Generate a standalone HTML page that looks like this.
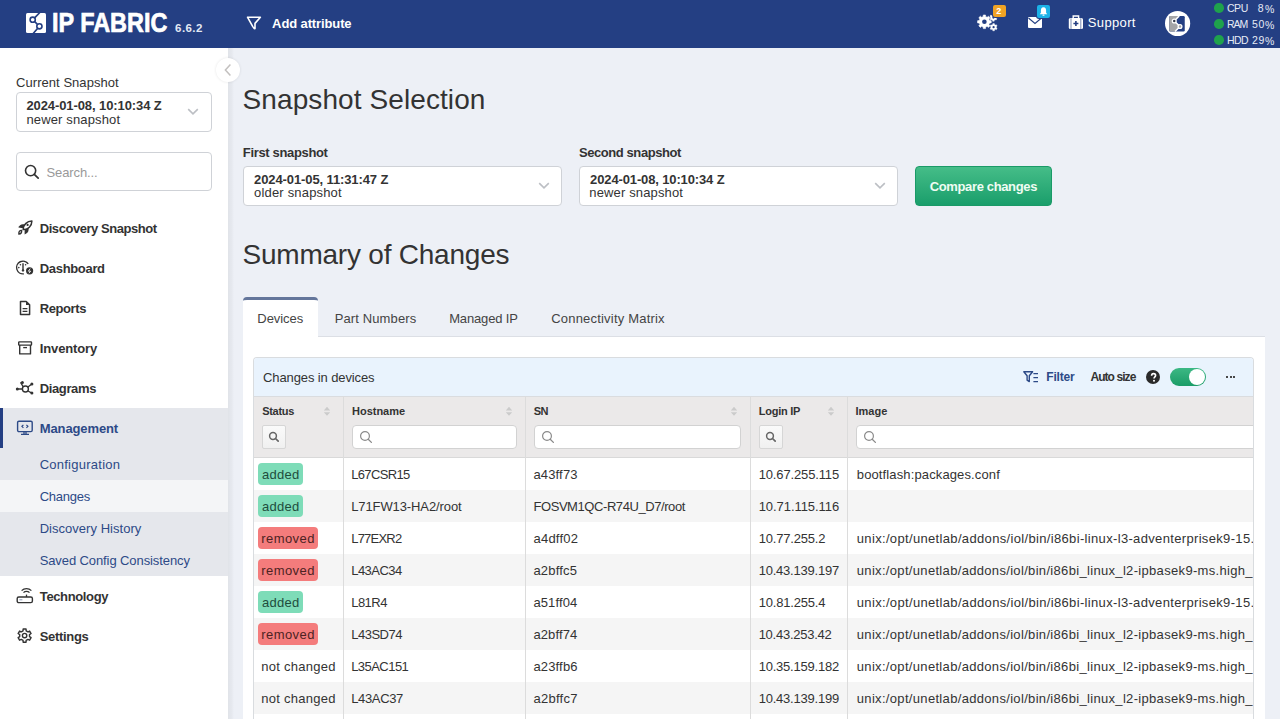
<!DOCTYPE html>
<html><head><meta charset="utf-8">
<style>
*{box-sizing:border-box;margin:0;padding:0}
html,body{width:1280px;height:719px;overflow:hidden;background:#edf0f6;font-family:"Liberation Sans",sans-serif;color:#333;position:relative}
.a{position:absolute;white-space:nowrap}
svg.a{overflow:visible}
</style></head><body>
<div class="a" style="left:0px;top:0px;width:1280px;height:48px;background:#243f83"></div>
<svg class="a" style="left:26px;top:13px" width="20" height="20" viewBox="0 0 20 20"><rect x="0" y="0" width="20" height="20" rx="1.5" fill="#fff"/><path d="M13.8 -0.5 L8.4 5.2 M12.6 14.2 L7.2 20.5" stroke="#243f83" stroke-width="1.7" fill="none"/><path d="M8.6 8.5 L11.2 11.2" stroke="#243f83" stroke-width="1.7"/><circle cx="6.7" cy="6.7" r="2.6" fill="#fff" stroke="#243f83" stroke-width="1.6"/><circle cx="13.4" cy="13.3" r="2.6" fill="#fff" stroke="#243f83" stroke-width="1.6"/></svg>
<svg class="a" style="left:246px;top:16px" width="16" height="14" viewBox="0 0 16 14"><path d="M1.6 1.3 H14.4 L9 7.4 V12.4 Q8.6 12.9 8.1 12.4 L6.8 10.6 Z" fill="none" stroke="#fff" stroke-width="1.6" stroke-linejoin="round"/></svg>
<svg class="a" style="left:975px;top:4px" width="36" height="30" viewBox="0 0 36 30"><path d="M8.14 12.65 L8.30 10.99 L10.50 10.99 L10.66 12.65 L12.15 13.27 L13.44 12.21 L14.99 13.76 L13.93 15.05 L14.55 16.54 L16.21 16.70 L16.21 18.90 L14.55 19.06 L13.93 20.55 L14.99 21.84 L13.44 23.39 L12.15 22.33 L10.66 22.95 L10.50 24.61 L8.30 24.61 L8.14 22.95 L6.65 22.33 L5.36 23.39 L3.81 21.84 L4.87 20.55 L4.25 19.06 L2.59 18.90 L2.59 16.70 L4.25 16.54 L4.87 15.05 L3.81 13.76 L5.36 12.21 L6.65 13.27 Z" fill="#fff" stroke="#fff" stroke-width="0.6" stroke-linejoin="round"/><circle cx="9.4" cy="17.8" r="2.3" fill="#243f83"/><path d="M17.72 20.54 L17.82 19.58 L19.38 19.58 L19.48 20.54 L20.46 21.11 L21.34 20.71 L22.12 22.07 L21.34 22.63 L21.34 23.77 L22.12 24.33 L21.34 25.69 L20.46 25.29 L19.48 25.86 L19.38 26.82 L17.82 26.82 L17.72 25.86 L16.74 25.29 L15.86 25.69 L15.08 24.33 L15.86 23.77 L15.86 22.63 L15.08 22.07 L15.86 20.71 L16.74 21.11 Z" fill="#fff" stroke="#fff" stroke-width="0.4"/><circle cx="18.6" cy="23.2" r="1.1" fill="#243f83"/><path d="M17.52 10.94 L17.62 9.98 L19.18 9.98 L19.28 10.94 L20.26 11.51 L21.14 11.11 L21.92 12.47 L21.14 13.03 L21.14 14.17 L21.92 14.73 L21.14 16.09 L20.26 15.69 L19.28 16.26 L19.18 17.22 L17.62 17.22 L17.52 16.26 L16.54 15.69 L15.66 16.09 L14.88 14.73 L15.66 14.17 L15.66 13.03 L14.88 12.47 L15.66 11.11 L16.54 11.51 Z" fill="#fff" stroke="#fff" stroke-width="0.4"/><circle cx="18.4" cy="13.6" r="1.1" fill="#243f83"/></svg>
<div class="a" style="left:993px;top:5px;width:13px;height:12px;background:#f0a324;border-radius:2px;box-shadow:0 0 0 1px #243f83"></div>
<svg class="a" style="left:1028px;top:17px" width="14" height="11" viewBox="0 0 14 11"><rect x="0" y="0" width="14" height="11" rx="1" fill="#fff"/><path d="M0.5 1 L7 6.5 L13.5 1" fill="none" stroke="#243f83" stroke-width="1.1"/></svg>
<div class="a" style="left:1037px;top:5px;width:13px;height:13px;background:#1bb2e8;border-radius:2px;box-shadow:0 0 0 1px #243f83"></div>
<svg class="a" style="left:1038px;top:6px" width="11" height="11" viewBox="0 0 11 11"><path d="M5.5 1.2 C3.4 1.2 2.9 3 2.9 4.6 V6.8 L1.8 8.2 H9.2 L8.1 6.8 V4.6 C8.1 3 7.6 1.2 5.5 1.2 Z" fill="#fff"/><rect x="4.5" y="8.6" width="2" height="1.2" rx="0.6" fill="#fff"/></svg>
<svg class="a" style="left:1068px;top:15px" width="16" height="14" viewBox="0 0 16 14"><rect x="0.8" y="3" width="14.2" height="11" rx="1.5" fill="#fff"/><path d="M5.2 3 V1 H10.6 V3" fill="none" stroke="#fff" stroke-width="1.4"/><path d="M3 3.2 V14 M12.8 3.2 V14" stroke="#243f83" stroke-width="0.6"/><path d="M7.9 6 V11 M5.4 8.5 H10.4" stroke="#243f83" stroke-width="1.6"/></svg>
<svg class="a" style="left:1165px;top:11px" width="26" height="26" viewBox="0 0 26 26"><circle cx="12.6" cy="12.5" r="12.6" fill="#fff"/><rect x="4.25" y="5" width="15.5" height="15.5" rx="1.3" fill="#243f83"/><path d="M4.25 6.2 Q4.25 5 5.5 5 H14.2 L9.25 10 L15 15.5 L10 20.5 H5.5 Q4.25 20.5 4.25 19.3 Z" fill="#a4a5a7"/><path d="M14.2 5 L9.25 10 L15 15.5 L10 20.5" fill="none" stroke="#fff" stroke-width="1.5"/><circle cx="9.25" cy="10" r="1.9" fill="#333a4a" stroke="#fff" stroke-width="1.3"/><circle cx="15" cy="15.5" r="1.9" fill="#a4a5a7" stroke="#fff" stroke-width="1.3"/></svg>
<div class="a" style="left:1214.2px;top:3.1000000000000005px;width:9.6px;height:9.6px;border-radius:50%;background:#1fa24c"></div>
<div class="a" style="left:1214.2px;top:19.099999999999998px;width:9.6px;height:9.6px;border-radius:50%;background:#1fa24c"></div>
<div class="a" style="left:1214.2px;top:35.1px;width:9.6px;height:9.6px;border-radius:50%;background:#1fa24c"></div>
<div class="a" style="left:0px;top:48px;width:228px;height:671px;background:#fff"></div>
<div class="a" style="left:228px;top:48px;width:6px;height:671px;background:linear-gradient(90deg,rgba(0,0,0,0.055),rgba(0,0,0,0.03) 60%,rgba(0,0,0,0))"></div>
<div class="a" style="left:16px;top:92px;width:196px;height:40px;background:#fff;border:1px solid #cfd2d7;border-radius:4px"></div>
<svg class="a" style="left:187px;top:108px" width="12" height="8" viewBox="0 0 12 8"><path d="M1.2 1.2 L6 5.8 L10.8 1.2" fill="none" stroke="#bcbfc4" stroke-width="1.6"/></svg>
<div class="a" style="left:16px;top:152px;width:196px;height:39px;background:#fff;border:1px solid #cfd2d7;border-radius:4px"></div>
<svg class="a" style="left:24px;top:164px" width="16" height="16" viewBox="0 0 16 16"><circle cx="6.6" cy="6.6" r="5.1" fill="none" stroke="#333" stroke-width="1.6"/><path d="M10.3 10.3 L14.2 14.2" stroke="#333" stroke-width="1.7" stroke-linecap="round"/></svg>
<div class="a" style="left:0px;top:408px;width:228px;height:168px;background:#e5e7ec"></div>
<div class="a" style="left:0px;top:480px;width:228px;height:32px;background:#f4f5f7"></div>
<div class="a" style="left:0px;top:408px;width:3px;height:40px;background:#243f83"></div>
<svg class="a" style="left:18px;top:220px" width="15" height="15" viewBox="0 0 15 15"><path d="M5.2 9.6 C5 5 9 1.2 13.9 1.1 C13.9 5.8 10 9.8 5.2 9.6 Z" fill="none" stroke="#333" stroke-width="1.5" stroke-linejoin="round"/><circle cx="9.6" cy="4.9" r="1.1" fill="#333"/><path d="M0.4 7.6 C1.2 5.6 2.6 4.2 5 4.2 H7 L5 8.2 Z" fill="#333"/><path d="M6.6 9.6 L10.6 7.6 V9.6 C10.6 12 9.2 13.6 6.6 14.4 Z" fill="#333"/><path d="M0.9 14.1 C0.6 12 1.5 10.4 3.6 10.4 C3.9 12.6 3 13.9 0.9 14.1 Z" fill="none" stroke="#333" stroke-width="1.4"/></svg>
<svg class="a" style="left:15px;top:260px" width="20" height="16" viewBox="0 0 20 16"><path d="M13.24 3.83 A6.4 6.4 0 1 0 8.89 13.84" fill="none" stroke="#333" stroke-width="1.4"/><path d="M8 3.2 V10.5" stroke="#333" stroke-width="1.4"/><circle cx="8" cy="10.4" r="1.2" fill="#333"/><circle cx="5.4" cy="4.8" r="0.8" fill="#333"/><circle cx="10.6" cy="4.8" r="0.8" fill="#333"/><circle cx="3.8" cy="7.6" r="0.8" fill="#333"/><circle cx="14.6" cy="10.8" r="3.6" fill="#333"/><path d="M15.2 8.6 L13.4 11.2 H15.6 L14 13.2" fill="none" stroke="#fff" stroke-width="0.9"/></svg>
<svg class="a" style="left:19px;top:300px" width="12" height="16" viewBox="0 0 12 16"><path d="M1.5 1.5 H7.2 L10.6 4.9 V14.6 H1.5 Z" fill="none" stroke="#333" stroke-width="1.5" stroke-linejoin="round"/><path d="M7 1.5 V5 H10.6 Z" fill="#333"/><path d="M3.6 8.6 H8.4 M3.6 11.3 H8.4" stroke="#333" stroke-width="1.3"/></svg>
<svg class="a" style="left:18px;top:341px" width="14" height="14" viewBox="0 0 14 14"><rect x="0.7" y="0.9" width="12.8" height="3.2" rx="0.6" fill="none" stroke="#333" stroke-width="1.4"/><path d="M1.7 4.1 V12.9 H12.5 V4.1" fill="none" stroke="#333" stroke-width="1.4" stroke-linejoin="round"/><path d="M5.2 6.6 H9" stroke="#333" stroke-width="1.3"/></svg>
<svg class="a" style="left:15px;top:380px" width="20" height="16" viewBox="0 0 20 16"><circle cx="10.4" cy="9" r="3" fill="none" stroke="#333" stroke-width="1.4"/><path d="M2.3 9 H7.4 M5.5 2.4 L8.3 6.9 M16.8 4 L12.6 7.2 M16.8 13.1 L12.6 10.8" stroke="#333" stroke-width="1.3"/><circle cx="2.3" cy="9" r="1.5" fill="#333"/><circle cx="7.4" cy="2.4" r="1.5" fill="#333"/><circle cx="16.9" cy="4" r="1.5" fill="#333"/><circle cx="16.9" cy="13.1" r="1.5" fill="#333"/></svg>
<svg class="a" style="left:16px;top:420px" width="18" height="16" viewBox="0 0 18 16"><rect x="1.6" y="1.2" width="14.6" height="10.4" rx="1.3" fill="none" stroke="#2d4a87" stroke-width="1.4"/><path d="M8 11.6 V14.3 M10 11.6 V14.3 M5 14.4 H13" stroke="#2d4a87" stroke-width="1.3"/><path d="M7.4 4.8 L5.9 6.3 L7.4 7.8 M10.4 4.8 L11.9 6.3 L10.4 7.8" fill="none" stroke="#2d4a87" stroke-width="1.2"/></svg>
<svg class="a" style="left:16px;top:588px" width="18" height="16" viewBox="0 0 18 16"><rect x="1.2" y="9" width="15.2" height="5.6" rx="1.6" fill="none" stroke="#333" stroke-width="1.4"/><path d="M10.5 6.6 V9" stroke="#333" stroke-width="1.3"/><path d="M7.5 4.6 A4.2 4.2 0 0 1 13.5 4.6 M5.6 2.6 A7 7 0 0 1 15.4 2.6" fill="none" stroke="#333" stroke-width="1.3"/><path d="M3.4 11.8 H6.4" stroke="#8795b5" stroke-width="1"/></svg>
<svg class="a" style="left:17px;top:628px" width="16" height="16" viewBox="0 0 16 16"><path d="M6.03 2.85 L6.16 0.95 L9.04 0.95 L9.17 2.85 L10.92 3.86 L12.64 3.03 L14.08 5.52 L12.50 6.59 L12.50 8.61 L14.08 9.68 L12.64 12.17 L10.92 11.34 L9.17 12.35 L9.04 14.25 L6.16 14.25 L6.03 12.35 L4.28 11.34 L2.56 12.17 L1.12 9.68 L2.70 8.61 L2.70 6.59 L1.12 5.52 L2.56 3.03 L4.28 3.86 Z" fill="none" stroke="#333" stroke-width="1.4" stroke-linejoin="round"/><circle cx="7.6" cy="7.6" r="2.2" fill="none" stroke="#333" stroke-width="1.4"/></svg>
<div class="a" style="left:215.5px;top:57.6px;width:24px;height:24px;border-radius:50%;background:#fff;box-shadow:0 0 3px rgba(0,0,0,0.10)"></div>
<svg class="a" style="left:222px;top:63px" width="12" height="14" viewBox="0 0 12 14"><path d="M8.4 1.6 L3.4 7 L8.4 12.4" fill="none" stroke="#c3c0bf" stroke-width="1.5"/></svg>
<div class="a" style="left:243px;top:166px;width:319px;height:40px;background:#fff;border:1px solid #cfd2d7;border-radius:4px"></div>
<svg class="a" style="left:538px;top:182px" width="12" height="8" viewBox="0 0 12 8"><path d="M1.2 1.2 L6 5.8 L10.8 1.2" fill="none" stroke="#bcbfc4" stroke-width="1.6"/></svg>
<div class="a" style="left:579px;top:166px;width:319px;height:40px;background:#fff;border:1px solid #cfd2d7;border-radius:4px"></div>
<svg class="a" style="left:874px;top:182px" width="12" height="8" viewBox="0 0 12 8"><path d="M1.2 1.2 L6 5.8 L10.8 1.2" fill="none" stroke="#bcbfc4" stroke-width="1.6"/></svg>
<div class="a" style="left:915px;top:166px;width:137px;height:40px;background:linear-gradient(#45bd88,#1a9e6b);border:1px solid #1a9a67;border-radius:4px"></div>
<div class="a" style="left:243px;top:336px;width:1022px;height:383px;background:#fff;border-top:1px solid #dcdfe5"></div>
<div class="a" style="left:243px;top:297px;width:75px;height:40px;background:#fff;border-radius:4px 4px 0 0;border-top:3px solid #64769b"></div>
<div id="card" class="a" style="left:253px;top:357px;width:1001px;height:362px;border:1px solid #d9dcdf;border-bottom:none;border-radius:4px 4px 0 0;overflow:hidden;background:#fff"><div class="a" style="left:0px;top:100px;width:1006px;height:32px;background:#fff"></div>
<div class="a" style="left:0px;top:132px;width:1006px;height:32px;background:#f5f5f5"></div>
<div class="a" style="left:0px;top:164px;width:1006px;height:32px;background:#fff"></div>
<div class="a" style="left:0px;top:196px;width:1006px;height:32px;background:#f5f5f5"></div>
<div class="a" style="left:0px;top:228px;width:1006px;height:32px;background:#fff"></div>
<div class="a" style="left:0px;top:260px;width:1006px;height:32px;background:#f5f5f5"></div>
<div class="a" style="left:0px;top:292px;width:1006px;height:32px;background:#fff"></div>
<div class="a" style="left:0px;top:324px;width:1006px;height:32px;background:#f5f5f5"></div>
<div class="a" style="left:0px;top:0px;width:1006px;height:39px;background:#e9f3fd;border-bottom:1px solid #dadcdf"></div>
<div class="a" style="left:0px;top:39px;width:1006px;height:61px;background:#ebe9e9;border-bottom:1px solid #d9d9d9"></div>
<div class="a" style="left:89px;top:38px;width:1px;height:323px;background:#dcdcdc"></div>
<div class="a" style="left:271px;top:38px;width:1px;height:323px;background:#dcdcdc"></div>
<div class="a" style="left:496px;top:38px;width:1px;height:323px;background:#dcdcdc"></div>
<div class="a" style="left:593px;top:38px;width:1px;height:323px;background:#dcdcdc"></div>
<svg class="a" style="left:69px;top:48px" width="8" height="11" viewBox="0 0 8 11"><path d="M0.8 4.4 L4 0.8 L7.2 4.4 Z M0.8 6.2 L4 9.8 L7.2 6.2 Z" fill="#cbcbcb"/></svg>
<svg class="a" style="left:251px;top:48px" width="8" height="11" viewBox="0 0 8 11"><path d="M0.8 4.4 L4 0.8 L7.2 4.4 Z M0.8 6.2 L4 9.8 L7.2 6.2 Z" fill="#cbcbcb"/></svg>
<svg class="a" style="left:476px;top:48px" width="8" height="11" viewBox="0 0 8 11"><path d="M0.8 4.4 L4 0.8 L7.2 4.4 Z M0.8 6.2 L4 9.8 L7.2 6.2 Z" fill="#cbcbcb"/></svg>
<svg class="a" style="left:573px;top:48px" width="8" height="11" viewBox="0 0 8 11"><path d="M0.8 4.4 L4 0.8 L7.2 4.4 Z M0.8 6.2 L4 9.8 L7.2 6.2 Z" fill="#cbcbcb"/></svg>
<div class="a" style="left:8px;top:67px;width:24px;height:24px;background:linear-gradient(#fafafa,#f0f0f0);border:1px solid #d6d6d6;border-radius:2px"></div>
<svg class="a" style="left:14px;top:73px" width="12" height="12" viewBox="0 0 12 12"><circle cx="5" cy="5" r="3.4" fill="none" stroke="#666" stroke-width="1.5"/><path d="M7.5 7.5 L10.2 10.2" stroke="#666" stroke-width="1.7" stroke-linecap="round"/></svg>
<div class="a" style="left:505px;top:67px;width:24px;height:24px;background:linear-gradient(#fafafa,#f0f0f0);border:1px solid #d6d6d6;border-radius:2px"></div>
<svg class="a" style="left:511px;top:73px" width="12" height="12" viewBox="0 0 12 12"><circle cx="5" cy="5" r="3.4" fill="none" stroke="#666" stroke-width="1.5"/><path d="M7.5 7.5 L10.2 10.2" stroke="#666" stroke-width="1.7" stroke-linecap="round"/></svg>
<div class="a" style="left:98px;top:67px;width:165px;height:24px;background:#fff;border:1px solid #d2d2d2;border-radius:4px"></div>
<svg class="a" style="left:105px;top:72px" width="14" height="14" viewBox="0 0 14 14"><circle cx="6" cy="6" r="4.4" fill="none" stroke="#8a8a8a" stroke-width="1.2"/><path d="M9.2 9.2 L12.4 12.4" stroke="#8a8a8a" stroke-width="1.3" stroke-linecap="round"/></svg>
<div class="a" style="left:280px;top:67px;width:207px;height:24px;background:#fff;border:1px solid #d2d2d2;border-radius:4px"></div>
<svg class="a" style="left:287px;top:72px" width="14" height="14" viewBox="0 0 14 14"><circle cx="6" cy="6" r="4.4" fill="none" stroke="#8a8a8a" stroke-width="1.2"/><path d="M9.2 9.2 L12.4 12.4" stroke="#8a8a8a" stroke-width="1.3" stroke-linecap="round"/></svg>
<div class="a" style="left:602px;top:67px;width:444px;height:24px;background:#fff;border:1px solid #d2d2d2;border-radius:4px"></div>
<svg class="a" style="left:609px;top:72px" width="14" height="14" viewBox="0 0 14 14"><circle cx="6" cy="6" r="4.4" fill="none" stroke="#8a8a8a" stroke-width="1.2"/><path d="M9.2 9.2 L12.4 12.4" stroke="#8a8a8a" stroke-width="1.3" stroke-linecap="round"/></svg>
<svg class="a" style="left:769px;top:13px" width="16" height="12" viewBox="0 0 16 12"><path d="M0.8 0.8 H9.6 L6.3 4.8 V10.6 L4.1 9.2 V4.8 Z" fill="none" stroke="#2d4a87" stroke-width="1.4" stroke-linejoin="round"/><path d="M10.4 2.6 H15 M10.4 6.6 H15 M10.4 10.6 H15" stroke="#2d4a87" stroke-width="1.4"/></svg>
<div class="a" style="left:892px;top:11.600000000000023px;width:14.2px;height:14.2px;border-radius:50%;background:#2a2a2a"></div>
<svg class="a" style="left:895px;top:14px" width="9" height="11" viewBox="0 0 9 11"><path d="M2.6 3.8 C2.6 2.2 3.6 1.6 4.6 1.6 C5.8 1.6 6.6 2.4 6.6 3.5 C6.6 4.8 5 5 5 6.6" fill="none" stroke="#fff" stroke-width="1.6"/><circle cx="5" cy="8.7" r="1" fill="#fff"/></svg>
<div class="a" style="left:916px;top:10px;width:36px;height:18px;border-radius:9px;background:linear-gradient(#3cb884,#1b9c67);"></div>
<div class="a" style="left:935px;top:11px;width:16px;height:16px;border-radius:50%;background:#fff"></div>
<div class="a" style="left:972.3px;top:18px;width:2px;height:2px;background:#474747"></div>
<div class="a" style="left:975.5999999999999px;top:18px;width:2px;height:2px;background:#474747"></div>
<div class="a" style="left:978.9000000000001px;top:18px;width:2px;height:2px;background:#474747"></div>
<div class="a" style="left:4px;top:105px;width:45px;height:22px;background:#7edcb8;border-radius:4px"></div>
<div class="a" style="left:4px;top:137px;width:45px;height:22px;background:#7edcb8;border-radius:4px"></div>
<div class="a" style="left:4px;top:169px;width:60px;height:22px;background:#f47c7c;border-radius:4px"></div>
<div class="a" style="left:4px;top:201px;width:60px;height:22px;background:#f47c7c;border-radius:4px"></div>
<div class="a" style="left:4px;top:233px;width:45px;height:22px;background:#7edcb8;border-radius:4px"></div>
<div class="a" style="left:4px;top:265px;width:60px;height:22px;background:#f47c7c;border-radius:4px"></div>
<div class="a" style="left:602.79px;top:110.00px;font-size:13px;line-height:13px;font-weight:400;color:#333;letter-spacing:0.126px;">bootflash:packages.conf</div>
<div class="a" style="left:602.79px;top:174.00px;font-size:13px;line-height:13px;font-weight:400;color:#333;letter-spacing:0.337px;">unix:/opt/unetlab/addons/iol/bin/i86bi-linux-l3-adventerprisek9-15.4</div>
<div class="a" style="left:602.79px;top:206.00px;font-size:13px;line-height:13px;font-weight:400;color:#333;letter-spacing:0.324px;">unix:/opt/unetlab/addons/iol/bin/i86bi_linux_l2-ipbasek9-ms.high_iron</div>
<div class="a" style="left:602.79px;top:238.00px;font-size:13px;line-height:13px;font-weight:400;color:#333;letter-spacing:0.337px;">unix:/opt/unetlab/addons/iol/bin/i86bi-linux-l3-adventerprisek9-15.4</div>
<div class="a" style="left:602.79px;top:270.00px;font-size:13px;line-height:13px;font-weight:400;color:#333;letter-spacing:0.324px;">unix:/opt/unetlab/addons/iol/bin/i86bi_linux_l2-ipbasek9-ms.high_iron</div>
<div class="a" style="left:602.79px;top:302.00px;font-size:13px;line-height:13px;font-weight:400;color:#333;letter-spacing:0.324px;">unix:/opt/unetlab/addons/iol/bin/i86bi_linux_l2-ipbasek9-ms.high_iron</div>
<div class="a" style="left:602.79px;top:334.00px;font-size:13px;line-height:13px;font-weight:400;color:#333;letter-spacing:0.324px;">unix:/opt/unetlab/addons/iol/bin/i86bi_linux_l2-ipbasek9-ms.high_iron</div></div>
<div class="a" style="left:52.34px;top:10.11px;font-size:26.8px;line-height:26.8px;font-weight:700;color:#fff;letter-spacing:0.000px;-webkit-text-stroke:0.7px #fff;transform:scaleX(0.8736);transform-origin:0 0;">IP FABRIC</div>
<div class="a" style="left:175.09px;top:22.57px;font-size:11.5px;line-height:11.5px;font-weight:700;color:#e3e9f5;letter-spacing:0.418px;">6.6.2</div>
<div class="a" style="left:272.11px;top:16.90px;font-size:13px;line-height:13px;font-weight:700;color:#fff;letter-spacing:-0.116px;">Add attribute</div>
<div class="a" style="left:1087.77px;top:16.30px;font-size:13px;line-height:13px;font-weight:400;color:#fff;letter-spacing:0.362px;">Support</div>
<div class="a" style="left:1226.93px;top:3.11px;font-size:10.5px;line-height:10.5px;font-weight:400;color:#e6ebf5;letter-spacing:-0.381px;">CPU</div>
<div class="a" style="left:1226.93px;top:19.11px;font-size:10.5px;line-height:10.5px;font-weight:400;color:#e6ebf5;letter-spacing:-1.027px;">RAM</div>
<div class="a" style="left:1226.93px;top:35.11px;font-size:10.5px;line-height:10.5px;font-weight:400;color:#e6ebf5;letter-spacing:-0.570px;">HDD</div>
<div class="a" style="left:1257.67px;top:3.11px;font-size:10.5px;line-height:10.5px;font-weight:400;color:#e6ebf5;letter-spacing:0.000px;">8</div>
<div class="a" style="left:996.37px;top:7.38px;font-size:9px;line-height:9px;font-weight:700;color:#fff;letter-spacing:0.000px;">2</div>
<div class="a" style="left:1252.07px;top:19.11px;font-size:10.5px;line-height:10.5px;font-weight:400;color:#e6ebf5;letter-spacing:0.562px;">50</div>
<div class="a" style="left:1252.07px;top:35.11px;font-size:10.5px;line-height:10.5px;font-weight:400;color:#e6ebf5;letter-spacing:0.562px;">29</div>
<div class="a" style="left:1265.07px;top:3.61px;font-size:10.5px;line-height:10.5px;font-weight:400;color:#e6ebf5;letter-spacing:1.006px;">%</div>
<div class="a" style="left:1265.07px;top:19.61px;font-size:10.5px;line-height:10.5px;font-weight:400;color:#e6ebf5;letter-spacing:1.006px;">%</div>
<div class="a" style="left:1265.07px;top:35.61px;font-size:10.5px;line-height:10.5px;font-weight:400;color:#e6ebf5;letter-spacing:1.006px;">%</div>
<div class="a" style="left:16.11px;top:76.20px;font-size:13px;line-height:13px;font-weight:400;color:#333;letter-spacing:0.040px;">Current Snapshot</div>
<div class="a" style="left:26.43px;top:98.80px;font-size:13px;line-height:13px;font-weight:700;color:#333;letter-spacing:-0.096px;">2024-01-08, 10:10:34 Z</div>
<div class="a" style="left:26.43px;top:112.70px;font-size:13px;line-height:13px;font-weight:400;color:#333;letter-spacing:0.141px;">newer snapshot</div>
<div class="a" style="left:46.53px;top:165.50px;font-size:13px;line-height:13px;font-weight:400;color:#999;letter-spacing:-0.116px;">Search...</div>
<div class="a" style="left:39.77px;top:221.80px;font-size:13px;line-height:13px;font-weight:700;color:#333;letter-spacing:-0.454px;">Discovery Snapshot</div>
<div class="a" style="left:39.77px;top:261.80px;font-size:13px;line-height:13px;font-weight:700;color:#333;letter-spacing:-0.326px;">Dashboard</div>
<div class="a" style="left:39.77px;top:301.60px;font-size:13px;line-height:13px;font-weight:700;color:#333;letter-spacing:-0.418px;">Reports</div>
<div class="a" style="left:39.77px;top:341.60px;font-size:13px;line-height:13px;font-weight:700;color:#333;letter-spacing:-0.127px;">Inventory</div>
<div class="a" style="left:39.77px;top:381.60px;font-size:13px;line-height:13px;font-weight:700;color:#333;letter-spacing:-0.376px;">Diagrams</div>
<div class="a" style="left:39.77px;top:421.60px;font-size:13px;line-height:13px;font-weight:700;color:#2d4a87;letter-spacing:-0.119px;">Management</div>
<div class="a" style="left:39.77px;top:589.60px;font-size:13px;line-height:13px;font-weight:700;color:#333;letter-spacing:-0.363px;">Technology</div>
<div class="a" style="left:39.77px;top:629.60px;font-size:13px;line-height:13px;font-weight:700;color:#333;letter-spacing:-0.320px;">Settings</div>
<div class="a" style="left:39.65px;top:457.80px;font-size:13px;line-height:13px;font-weight:400;color:#2d4a87;letter-spacing:0.256px;">Configuration</div>
<div class="a" style="left:39.65px;top:489.80px;font-size:13px;line-height:13px;font-weight:400;color:#2d4a87;letter-spacing:-0.218px;">Changes</div>
<div class="a" style="left:39.65px;top:521.80px;font-size:13px;line-height:13px;font-weight:400;color:#2d4a87;letter-spacing:0.031px;">Discovery History</div>
<div class="a" style="left:39.65px;top:553.70px;font-size:13px;line-height:13px;font-weight:400;color:#2d4a87;letter-spacing:-0.095px;">Saved Config Consistency</div>
<div class="a" style="left:242.62px;top:86.30px;font-size:28px;line-height:28px;font-weight:400;color:#333;letter-spacing:0.089px;">Snapshot Selection</div>
<div class="a" style="left:242.87px;top:145.70px;font-size:13px;line-height:13px;font-weight:700;color:#333;letter-spacing:-0.346px;">First snapshot</div>
<div class="a" style="left:254.11px;top:173.00px;font-size:13px;line-height:13px;font-weight:700;color:#333;letter-spacing:-0.111px;">2024-01-05, 11:31:47 Z</div>
<div class="a" style="left:254.11px;top:185.90px;font-size:13px;line-height:13px;font-weight:400;color:#333;letter-spacing:0.171px;">older snapshot</div>
<div class="a" style="left:578.99px;top:145.70px;font-size:13px;line-height:13px;font-weight:700;color:#333;letter-spacing:-0.426px;">Second snapshot</div>
<div class="a" style="left:590.11px;top:173.00px;font-size:13px;line-height:13px;font-weight:700;color:#333;letter-spacing:-0.134px;">2024-01-08, 10:10:34 Z</div>
<div class="a" style="left:589.31px;top:185.90px;font-size:13px;line-height:13px;font-weight:400;color:#333;letter-spacing:0.141px;">newer snapshot</div>
<div class="a" style="left:929.65px;top:179.50px;font-size:13px;line-height:13px;font-weight:700;color:#effcf3;letter-spacing:-0.355px;">Compare changes</div>
<div class="a" style="left:242.50px;top:241.20px;font-size:28px;line-height:28px;font-weight:400;color:#333;letter-spacing:-0.223px;">Summary of Changes</div>
<div class="a" style="left:257.31px;top:311.50px;font-size:13px;line-height:13px;font-weight:400;color:#444;letter-spacing:-0.045px;">Devices</div>
<div class="a" style="left:334.75px;top:311.50px;font-size:13px;line-height:13px;font-weight:400;color:#444;letter-spacing:0.111px;">Part Numbers</div>
<div class="a" style="left:449.19px;top:311.50px;font-size:13px;line-height:13px;font-weight:400;color:#444;letter-spacing:-0.150px;">Managed IP</div>
<div class="a" style="left:551.21px;top:311.50px;font-size:13px;line-height:13px;font-weight:400;color:#444;letter-spacing:0.199px;">Connectivity Matrix</div>
<div class="a" style="left:263.09px;top:370.50px;font-size:13px;line-height:13px;font-weight:400;color:#333;letter-spacing:-0.115px;">Changes in devices</div>
<div class="a" style="left:1046.26px;top:371.34px;font-size:12px;line-height:12px;font-weight:700;color:#2d4a87;letter-spacing:-0.205px;">Filter</div>
<div class="a" style="left:1090.40px;top:371.34px;font-size:12px;line-height:12px;font-weight:700;color:#333;letter-spacing:-0.923px;">Auto size</div>
<div class="a" style="left:262.13px;top:405.89px;font-size:11px;line-height:11px;font-weight:700;color:#333;letter-spacing:-0.285px;">Status</div>
<div class="a" style="left:352.01px;top:405.89px;font-size:11px;line-height:11px;font-weight:700;color:#333;letter-spacing:-0.012px;">Hostname</div>
<div class="a" style="left:533.79px;top:405.89px;font-size:11px;line-height:11px;font-weight:700;color:#333;letter-spacing:-0.621px;">SN</div>
<div class="a" style="left:758.79px;top:405.89px;font-size:11px;line-height:11px;font-weight:700;color:#333;letter-spacing:-0.264px;">Login IP</div>
<div class="a" style="left:855.45px;top:405.89px;font-size:11px;line-height:11px;font-weight:700;color:#333;letter-spacing:0.046px;">Image</div>
<div class="a" style="left:262.11px;top:468.00px;font-size:13px;line-height:13px;font-weight:400;color:#1f4d3d;letter-spacing:0.226px;">added</div>
<div class="a" style="left:351.19px;top:468.00px;font-size:13px;line-height:13px;font-weight:400;color:#333;letter-spacing:-0.644px;">L67CSR15</div>
<div class="a" style="left:533.43px;top:468.00px;font-size:13px;line-height:13px;font-weight:400;color:#333;letter-spacing:0.157px;">a43ff73</div>
<div class="a" style="left:758.65px;top:468.00px;font-size:13px;line-height:13px;font-weight:400;color:#333;letter-spacing:-0.138px;">10.67.255.115</div>
<div class="a" style="left:262.11px;top:500.00px;font-size:13px;line-height:13px;font-weight:400;color:#1f4d3d;letter-spacing:0.226px;">added</div>
<div class="a" style="left:351.19px;top:500.00px;font-size:13px;line-height:13px;font-weight:400;color:#333;letter-spacing:-0.099px;">L71FW13-HA2/root</div>
<div class="a" style="left:533.43px;top:500.00px;font-size:13px;line-height:13px;font-weight:400;color:#333;letter-spacing:-0.423px;">FOSVM1QC-R74U_D7/root</div>
<div class="a" style="left:758.65px;top:500.00px;font-size:13px;line-height:13px;font-weight:400;color:#333;letter-spacing:-0.058px;">10.71.115.116</div>
<div class="a" style="left:261.31px;top:532.00px;font-size:13px;line-height:13px;font-weight:400;color:#4d2323;letter-spacing:0.417px;">removed</div>
<div class="a" style="left:351.19px;top:532.00px;font-size:13px;line-height:13px;font-weight:400;color:#333;letter-spacing:-0.779px;">L77EXR2</div>
<div class="a" style="left:533.43px;top:532.00px;font-size:13px;line-height:13px;font-weight:400;color:#333;letter-spacing:0.250px;">a4dff02</div>
<div class="a" style="left:758.65px;top:532.00px;font-size:13px;line-height:13px;font-weight:400;color:#333;letter-spacing:-0.183px;">10.77.255.2</div>
<div class="a" style="left:261.31px;top:564.00px;font-size:13px;line-height:13px;font-weight:400;color:#4d2323;letter-spacing:0.417px;">removed</div>
<div class="a" style="left:351.19px;top:564.00px;font-size:13px;line-height:13px;font-weight:400;color:#333;letter-spacing:-0.540px;">L43AC34</div>
<div class="a" style="left:533.43px;top:564.00px;font-size:13px;line-height:13px;font-weight:400;color:#333;letter-spacing:0.183px;">a2bffc5</div>
<div class="a" style="left:758.65px;top:564.00px;font-size:13px;line-height:13px;font-weight:400;color:#333;letter-spacing:-0.218px;">10.43.139.197</div>
<div class="a" style="left:262.11px;top:596.00px;font-size:13px;line-height:13px;font-weight:400;color:#1f4d3d;letter-spacing:0.226px;">added</div>
<div class="a" style="left:351.19px;top:596.00px;font-size:13px;line-height:13px;font-weight:400;color:#333;letter-spacing:-0.528px;">L81R4</div>
<div class="a" style="left:533.43px;top:596.00px;font-size:13px;line-height:13px;font-weight:400;color:#333;letter-spacing:0.117px;">a51ff04</div>
<div class="a" style="left:758.65px;top:596.00px;font-size:13px;line-height:13px;font-weight:400;color:#333;letter-spacing:-0.183px;">10.81.255.4</div>
<div class="a" style="left:261.31px;top:628.00px;font-size:13px;line-height:13px;font-weight:400;color:#4d2323;letter-spacing:0.417px;">removed</div>
<div class="a" style="left:351.19px;top:628.00px;font-size:13px;line-height:13px;font-weight:400;color:#333;letter-spacing:-0.486px;">L43SD74</div>
<div class="a" style="left:533.43px;top:628.00px;font-size:13px;line-height:13px;font-weight:400;color:#333;letter-spacing:0.117px;">a2bff74</div>
<div class="a" style="left:758.65px;top:628.00px;font-size:13px;line-height:13px;font-weight:400;color:#333;letter-spacing:-0.248px;">10.43.253.42</div>
<div class="a" style="left:261.31px;top:660.00px;font-size:13px;line-height:13px;font-weight:400;color:#333;letter-spacing:0.252px;">not changed</div>
<div class="a" style="left:351.19px;top:660.00px;font-size:13px;line-height:13px;font-weight:400;color:#333;letter-spacing:-0.545px;">L35AC151</div>
<div class="a" style="left:533.43px;top:660.00px;font-size:13px;line-height:13px;font-weight:400;color:#333;letter-spacing:0.157px;">a23ffb6</div>
<div class="a" style="left:758.65px;top:660.00px;font-size:13px;line-height:13px;font-weight:400;color:#333;letter-spacing:-0.218px;">10.35.159.182</div>
<div class="a" style="left:261.31px;top:692.00px;font-size:13px;line-height:13px;font-weight:400;color:#333;letter-spacing:0.252px;">not changed</div>
<div class="a" style="left:351.19px;top:692.00px;font-size:13px;line-height:13px;font-weight:400;color:#333;letter-spacing:-0.353px;">L43AC37</div>
<div class="a" style="left:533.43px;top:692.00px;font-size:13px;line-height:13px;font-weight:400;color:#333;letter-spacing:0.276px;">a2bffc7</div>
<div class="a" style="left:758.65px;top:692.00px;font-size:13px;line-height:13px;font-weight:400;color:#333;letter-spacing:-0.218px;">10.43.139.199</div>
</body></html>
